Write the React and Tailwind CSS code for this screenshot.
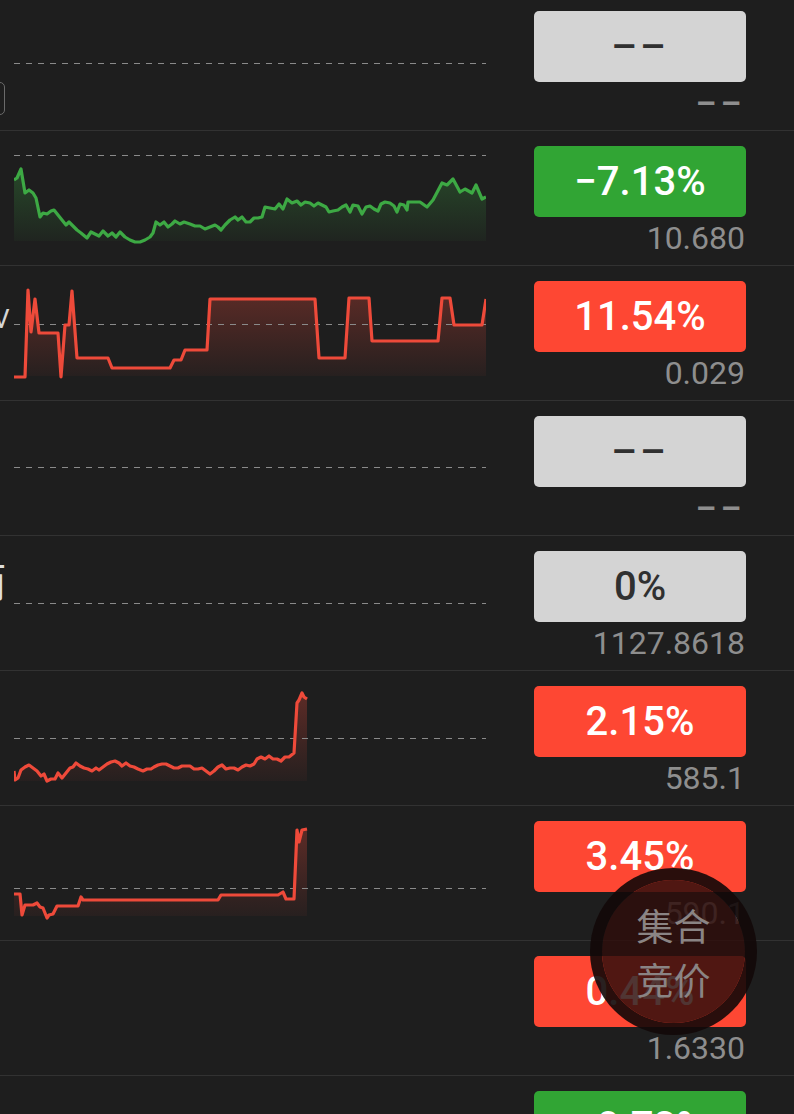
const greenLine = [
  [14, 180], [17, 178], [21, 169], [25, 193], [29, 190], [33, 193], [36, 198], [40, 217], [43, 213], [47, 214],
  [51, 211], [54, 210], [58, 215], [62, 220], [66, 225], [69, 222], [73, 226], [77, 230], [81, 233], [87, 238],
  [91, 232], [95, 234], [99, 236], [103, 231], [108, 236], [112, 233], [116, 237], [120, 232], [125, 237], [130, 240],
  [135, 242], [140, 242], [145, 240], [150, 237], [153, 233], [156, 222], [160, 225], [164, 222], [168, 227], [172, 224],
  [175, 221], [180, 224], [184, 222], [190, 224], [195, 226], [200, 226], [205, 229], [210, 227], [215, 225], [218, 227],
  [221, 230], [225, 225], [230, 220], [235, 217], [238, 220], [242, 217], [246, 222], [250, 222], [254, 218], [258, 218],
  [262, 217], [265, 207], [270, 208], [275, 209], [279, 204], [283, 209], [287, 199], [292, 203], [297, 201], [301, 205],
  [305, 202], [310, 203], [314, 206], [318, 203], [322, 205], [326, 207], [329, 212], [333, 211], [338, 210], [342, 207],
  [346, 205], [350, 212], [353, 205], [358, 206], [362, 214], [366, 207], [370, 206], [374, 209], [378, 211], [381, 204],
  [385, 202], [390, 203], [394, 206], [397, 212], [400, 204], [404, 205], [407, 210], [408, 202], [420, 202], [427, 207],
  [433, 200], [442, 183], [447, 185], [453, 179], [460, 192], [465, 189], [472, 193], [476, 185], [482, 199], [486, 197],
];

const stepLine = [
  [14, 377], [25, 377], [28, 290], [31, 332], [35, 299], [39, 333], [58, 333], [61, 377], [65, 325], [69, 325],
  [72, 291], [77, 358], [108, 358], [112, 368], [170, 368], [174, 360], [181, 360], [185, 350], [207, 350], [210, 299],
  [315, 299], [319, 358], [345, 358], [349, 298], [369, 298], [372, 341], [438, 341], [442, 298], [450, 298], [454, 325],
  [482, 325], [486, 299],
];

const riseLine = [
  [14, 771], [15, 780], [18, 778], [21, 770], [25, 767], [29, 765], [33, 768], [37, 771], [41, 776], [44, 774],
  [47, 781], [51, 779], [55, 779], [58, 773], [62, 778], [66, 773], [70, 768], [73, 767], [76, 763], [80, 766],
  [84, 768], [88, 769], [92, 771], [96, 768], [99, 770], [103, 767], [107, 764], [111, 762], [115, 761], [119, 763],
  [122, 766], [126, 763], [130, 766], [134, 767], [138, 769], [143, 771], [147, 769], [151, 769], [154, 767], [158, 765],
  [162, 764], [166, 764], [170, 766], [174, 768], [178, 768], [182, 766], [186, 766], [190, 766], [194, 769], [198, 769],
  [202, 768], [206, 771], [210, 774], [214, 771], [218, 767], [222, 765], [226, 769], [230, 768], [234, 768], [238, 770],
  [242, 767], [246, 765], [250, 766], [254, 764], [257, 759], [261, 757], [265, 759], [269, 756], [273, 759], [277, 759],
  [281, 761], [285, 757], [289, 757], [294, 753], [297, 703], [299, 700], [302, 693], [304, 697], [307, 699],
];

const flatLine = [
  [14, 894], [20, 894], [22, 915], [25, 905], [33, 905], [37, 903], [40, 907], [43, 908], [47, 918], [49, 915],
  [53, 914], [57, 906], [78, 906], [81, 897], [83, 900], [218, 900], [221, 895], [278, 895], [283, 892], [286, 899],
  [294, 899], [297, 830], [299, 842], [302, 830], [307, 829],
];

const rows = [
  { dash: 67, badge: "––", tone: "flat", value: "––", left: "box" },
  { dash: 24, line: greenLine, color: "#3da944", badge: "−7.13%", tone: "down", value: "10.680" },
  { dash: 58, line: stepLine, color: "#ee4a3a", badge: "11.54%", tone: "up", value: "0.029", left: "v" },
  { dash: 66, badge: "––", tone: "flat", value: "––" },
  { dash: 67, badge: "0%", tone: "flat", value: "1127.8618", left: "glyph" },
  { dash: 67, line: riseLine, color: "#ee4a3a", badge: "2.15%", tone: "up", value: "585.1" },
  { dash: 82, line: flatLine, color: "#ee4a3a", badge: "3.45%", tone: "up", value: "590.1" },
  { badge: "0.44%", tone: "up", value: "1.6330" },
  { badge: "−0.73%", tone: "down", value: "12.100" },
];

const badgeTone = {
  flat: "bg-[#d4d4d4] text-[#303030]",
  up: "bg-[#fe4733] text-white",
  down: "bg-[#31a534] text-white",
};

function Spark({ row, index }) {
  const top = -4 + 135 * index;
  const pts = row.line ? row.line.map(([x, y]) => [x - 14, y - top]) : null;
  const id = `fill${index}`;
  return (
    <svg width="472" height="134" className="shrink-0">
      {pts && (
        <>
          <defs>
            <linearGradient id={id} x1="0" y1="0" x2="0" y2="1">
              <stop offset="0" stopColor={row.color} stopOpacity="0.3" />
              <stop offset="1" stopColor={row.color} stopOpacity="0.04" />
            </linearGradient>
          </defs>
          <path
            d={`M${pts.map((p) => p.join(",")).join(" L")} L${pts[pts.length - 1][0]},110 L${pts[0][0]},110 Z`}
            fill={`url(#${id})`}
          />
        </>
      )}
      {row.dash != null && (
        <line x1="0" x2="472" y1={row.dash + 0.5} y2={row.dash + 0.5} stroke="#8a8a8a" strokeWidth="1" strokeDasharray="6 6" />
      )}
      {pts && (
        <polyline
          points={pts.map((p) => p.join(",")).join(" ")}
          fill="none"
          stroke={row.color}
          strokeWidth="3.2"
          strokeLinejoin="round"
        />
      )}
    </svg>
  );
}

function Row({ row, index }) {
  const dashes = row.value === "––";
  return (
    <div className="relative flex h-[135px] border-b border-[#323232] pl-[14px] pr-[48px]">
      {row.left === "box" && (
        <div className="absolute left-[-20px] top-[86px] w-[25px] h-[33px] rounded-[5px] border border-[#6a6a6a]" />
      )}
      {row.left === "v" && (
        <span className="absolute left-[-7px] top-[40px] text-[26px] leading-none text-[#d6d6d6]">V</span>
      )}
      {row.left === "glyph" && (
        <span className="absolute left-[-34px] top-[24px] text-[40px] leading-none text-[#dedede] font-['Noto_Sans_CJK_SC',sans-serif]">
          而
        </span>
      )}
      <Spark row={row} index={index} />
      <div className="flex-1" />
      <div className="w-[212px] flex flex-col items-end">
        <div
          className={`mt-[15px] h-[71px] w-full rounded-[5px] flex items-center justify-center text-[40px] leading-none font-medium ${badgeTone[row.tone]} ${row.badge === "––" ? "tracking-[3px] font-bold" : ""}`}
        >
          {row.badge}
        </div>
        <div
          className={`mt-[5px] text-[32px] leading-[32px] text-[#8e8e8e] ${dashes ? "tracking-[5px] font-bold text-[30px]" : "pr-[1px]"}`}
        >
          {row.value}
        </div>
      </div>
    </div>
  );
}

export default function App() {
  return (
    <div className="relative w-[794px] h-[1114px] overflow-hidden bg-[#1e1e1e] font-[Roboto,'Noto_Sans_CJK_SC',sans-serif]">
      <div className="-mt-[4px]">
        {rows.map((row, i) => (
          <Row key={i} row={row} index={i} />
        ))}
      </div>
      <div className="absolute left-[590px] top-[868px] w-[167px] h-[167px] rounded-full border-[12px] border-[rgba(18,8,8,0.9)] bg-[rgba(46,14,12,0.84)] bg-clip-padding flex flex-col items-center justify-center text-[37px] leading-[54px] text-[#8a8484] font-['Noto_Sans_CJK_SC',sans-serif]">
        <span>集合</span>
        <span>竞价</span>
      </div>
    </div>
  );
}
